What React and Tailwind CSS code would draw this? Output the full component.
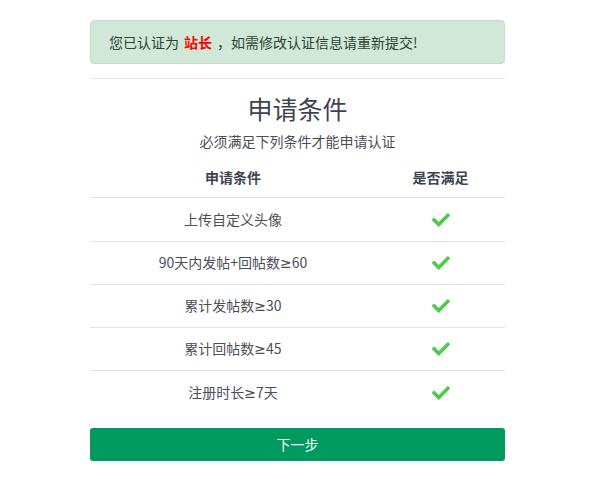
import React from "react";

function Check() {
  return (
    <svg width="18" height="18" viewBox="0 0 512 512" fill="#4ccb4e">
      <path d="M173.898 439.404l-166.4-166.4c-9.997-9.997-9.997-26.206 0-36.204l36.203-36.204c9.997-9.998 26.207-9.998 36.204 0L192 312.69 432.095 72.596c9.997-9.997 26.207-9.997 36.204 0l36.203 36.204c9.997 9.997 9.997 26.206 0 36.204l-294.4 294.401c-9.998 9.997-26.207 9.997-36.204-.001z" />
    </svg>
  );
}

const Ge = () => (
  <span style={{ fontFamily: '"DejaVu Sans", sans-serif' }}>≥</span>
);

const rows = [
  <>上传自定义头像</>,
  <>90天内发帖+回帖数<Ge />60</>,
  <>累计发帖数<Ge />30</>,
  <>累计回帖数<Ge />45</>,
  <>注册时长<Ge />7天</>,
];

export default function App() {
  return (
    <div
      className="min-h-[479px] w-[603px] bg-white text-[14px]"
      style={{ fontFamily: '"Noto Sans CJK SC", "Noto Sans", sans-serif' }}
    >
      <div className="ml-[90px] w-[415px] pt-[20px]">
        <div className="flex h-[44px] items-center rounded-[4px] border border-[#c3dfca] bg-[#d1e7d8] px-[18px] text-[#2b4531]">
          <span>您已认证为</span>
          <span className="ml-[5px] font-bold text-[#ff0000]">站长</span>
          <span className="ml-[5px]">，如需修改认证信息请重新提交!</span>
        </div>
        <div className="mt-[14px] border-t border-[#e6e6e6]" />
        <div className="mt-[11px] h-[36px] text-center text-[25px] leading-[36px] text-[#3d4450]">
          申请条件
        </div>
        <div className="mt-[5px] h-[20px] text-center leading-[20px] text-[#4a4f58]">
          必须满足下列条件才能申请认证
        </div>
        <div className="mt-[6px] flex h-[41px] items-center border-b border-[#e3e3e3] font-bold text-[#3d4450]">
          <div className="w-[286px] text-center">申请条件</div>
          <div className="flex-1 text-center">是否满足</div>
        </div>
        {rows.map((r, i) => (
          <div
            key={i}
            className={
              i === 0
                ? "flex h-[44px] items-center border-b border-[#e3e3e3] text-[#4a4f58]"
                : i < rows.length - 1
                ? "flex h-[43px] items-center border-b border-[#e3e3e3] text-[#4a4f58]"
                : "flex h-[43px] items-center text-[#4a4f58]"
            }
          >
            <div className="w-[286px] text-center">{r}</div>
            <div className="flex flex-1 justify-center">
              <Check />
            </div>
          </div>
        ))}
        <button className="mt-[14px] flex h-[33px] w-full items-center justify-center rounded-[3px] bg-[#00995e] text-white">
          下一步
        </button>
      </div>
    </div>
  );
}
